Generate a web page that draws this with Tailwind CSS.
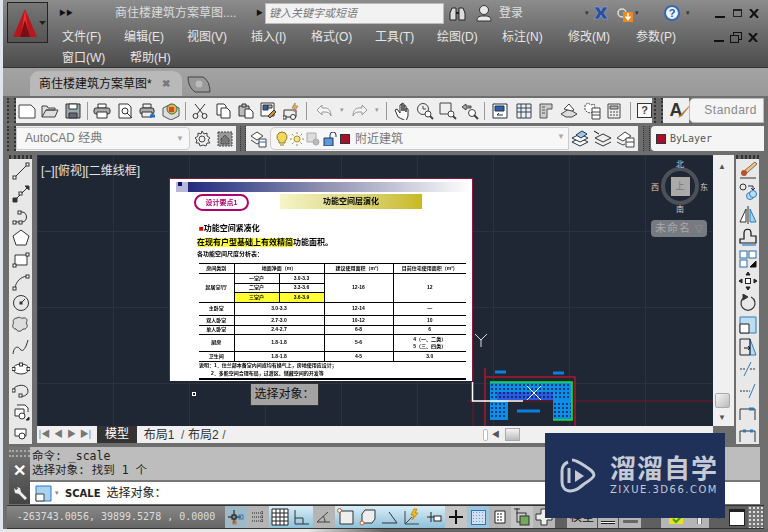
<!DOCTYPE html>
<html lang="zh-CN">

<head>
  <meta charset="UTF-8">
  <title>AutoCAD</title>
  <script src="https://cdn.jsdelivr.net/npm/@tailwindcss/browser@4"></script>
</head>

<body class="m-0 overflow-hidden">
  <div class="relative w-[768px] h-[532px] overflow-hidden flex flex-col bg-[#6e6e6e] font-['Liberation_Sans','Noto_Sans_CJK_SC',sans-serif]">

    <!-- window behind, showing down the left edge -->
    <div class="absolute left-0 top-0 w-[3px] h-full bg-[#dfe6ee] z-10"></div>

    <!-- title bar + menu -->
    <div class="relative h-[68px] shrink-0 bg-gradient-to-b from-[#8c8c8c] to-[#4c4c4c] border-b border-[#333] text-[#e6e6e6]">
      <!-- app button -->
      <div class="absolute left-[7px] top-[2px] w-[41px] h-[41px] border border-[#222] bg-gradient-to-b from-[#777] to-[#555] flex items-center pl-[4px] gap-[1px]">
        <svg width="26" height="30" viewBox="0 0 26 30"><path d="M13 1 L25 29 H18 L16 22 H10 L8 29 H1 Z" fill="#b8161f"/><path d="M13 1 L16 22 H10 Z" fill="#ee3030"/><path d="M13 12 L18 29 H8 Z" fill="#7c0d12"/></svg>
        <svg width="7" height="4" viewBox="0 0 7 4"><path d="M0 0H7L3.5 4Z" fill="#222"/></svg>
      </div>
      <div class="flex items-center h-[26px] pl-[59px]">
        <span class="text-[7px] text-[#111] w-[56px]">▶▶</span>
        <span class="text-[12px] w-[141px] whitespace-nowrap text-[#dcdcdc]">商住楼建筑方案草图....</span>
        <span class="text-[7px] text-[#111] w-[9px]">▶</span>
        <div class="w-[179px] h-[21px] bg-[#f2f2f2] border border-[#bbb] text-[11px] italic text-[#777] pl-[3px] leading-[19px]">键入关键字或短语</div>
        <svg class="ml-[5px]" width="17" height="17" viewBox="0 0 17 17"><path d="M3 3h4v12H1V8zM10 3h4l2 5v7h-6z" fill="#ddd" stroke="#222"/><path d="M7 8h3" stroke="#222" stroke-width="2"/></svg>
        <svg class="ml-[9px]" width="18" height="18" viewBox="0 0 18 18"><circle cx="9" cy="6" r="4.5" fill="#e8e8e8" stroke="#333"/><path d="M2 17c0-5 3-5 7-5s7 0 7 5z" fill="#e8e8e8" stroke="#333"/></svg>
        <span class="ml-[6px] text-[12px] text-[#e0e0e0]">登录</span>
        <span class="ml-[62px] text-[7px] text-[#333]">▾</span>
        <svg class="ml-[4px]" width="16" height="16" viewBox="0 0 16 16"><path d="M1 2h5l2 4 2-4h5l-4 6 4 6h-5l-2-4-2 4H1l4-6z" fill="#2f4f9e" stroke="#9db7e0" stroke-width=".5"/></svg>
        <svg class="ml-[7px]" width="17" height="17" viewBox="0 0 17 17"><circle cx="6" cy="8" r="4" fill="none" stroke="#ddd" stroke-width="1.5"/><rect x="7" y="7" width="10" height="10" fill="#e88a20"/><path d="M12 8v6M9.500 11.500l2.500 3 2.500-3" stroke="#fff" fill="none" stroke-width="1.500"/></svg>
        <span class="ml-[2px] text-[7px] text-[#333]">▾</span>
        <div class="ml-[25px] w-[16px] h-[16px] rounded-full bg-[#eef3fb] border-2 border-[#3767b5] text-[#2c58a6] text-[11px] font-bold leading-[12px] text-center">?</div>
        <span class="ml-[6px] text-[7px] text-[#333]">▾</span>
        <div class="ml-[25px] w-[10px] h-[2px] mt-[8px] bg-[#111]"></div>
        <div class="ml-[8px] w-[9px] h-[8px] border border-[#222] border-t-2"></div>
        <svg class="ml-[7px]" width="10" height="9" viewBox="0 0 10 9"><path d="M1 0l8 9M9 0L1 9" stroke="#111" stroke-width="2"/></svg>
      </div>
      <div class="flex items-center h-[22px] text-[12px] pl-[62px] whitespace-nowrap">
        <span class="w-[62px]">文件(F)</span><span class="w-[63px]">编辑(E)</span><span class="w-[64px]">视图(V)</span><span class="w-[60px]">插入(I)</span><span class="w-[64px]">格式(O)</span><span class="w-[62px]">工具(T)</span><span class="w-[65px]">绘图(D)</span><span class="w-[66px]">标注(N)</span><span class="w-[68px]">修改(M)</span><span class="w-[78px]">参数(P)</span>
        <div class="w-[10px] h-[2px] mt-[8px] bg-[#111]"></div>
        <svg class="ml-[6px]" width="12" height="11" viewBox="0 0 12 11" fill="none" stroke="#111"><rect x="3.500" y=".5" width="8" height="7"/><rect x=".5" y="3.500" width="8" height="7" fill="#666"/></svg>
        <svg class="ml-[6px]" width="10" height="9" viewBox="0 0 10 9"><path d="M1 0l8 9M9 0L1 9" stroke="#111" stroke-width="2"/></svg>
      </div>
      <div class="flex items-center h-[19px] text-[12px] pl-[62px]">
        <span class="w-[68px]">窗口(W)</span><span>帮助(H)</span>
      </div>
    </div>

    <!-- drawing tabs -->
    <div class="relative h-[28px] shrink-0 bg-gradient-to-b from-[#a3a3a3] to-[#999] pl-[30px] flex items-end">
      <div class="w-[152px] h-[25px] rounded-t-[9px] bg-[#b9b9b9] flex items-center pl-[9px] text-[12px] text-[#111]">商住楼建筑方案草图*<span class="ml-[10px] text-[10px] text-[#777] font-bold">✖</span></div>
      <svg class="ml-[5px] mb-[3px]" width="24" height="18" viewBox="0 0 24 18"><path d="M1 2 H16 Q23 6 23 17 H8 Q1 12 1 2Z" fill="#999" stroke="#444"/><circle cx="12" cy="9" r="3.500" fill="#bbb"/></svg>
    </div>

    <!-- standard toolbar -->
    <div class="flex h-[25px] ml-[7px] mt-[2px] shrink-0 w-[757px]">
      <div class="w-[9px] bg-[#666] border-x-2 border-dotted border-[#333]"></div>
      <div class="w-[636px] bg-[#efefef] flex items-center text-[#333]">
        <div class="w-[23px] flex justify-center"><svg width="18" height="16" viewBox="0 0 18 16" fill="#fff" stroke="#444"><path d="M1 2h12l4 4v9H1z"/></svg></div>
        <div class="w-[23px] flex justify-center"><svg width="18" height="16" viewBox="0 0 18 16" fill="#ddd" stroke="#444"><path d="M1 14V3h5l1 2h7v2H5L1 14h13l3-7H5"/></svg></div>
        <div class="w-[23px] flex justify-center"><svg width="16" height="16" viewBox="0 0 16 16" fill="#9aa" stroke="#333"><path d="M1 1h14v14H1z"/><path d="M4 1h8v5H4z" fill="#fff"/><path d="M4 10h8v5H4z" fill="#667"/></svg></div>
        <div class="w-[6px] flex justify-center"><div class="w-[1px] h-[18px] bg-[#999]"></div></div>
        <div class="w-[23px] flex justify-center"><svg width="18" height="16" viewBox="0 0 18 16" fill="#fff" stroke="#333"><path d="M5 1h8v4H5z"/><rect x="1" y="5" width="16" height="6" rx="2" fill="#aaa"/><path d="M4 9h10v6H4z"/></svg></div>
        <div class="w-[23px] flex justify-center"><svg width="16" height="16" viewBox="0 0 16 16" fill="#fff" stroke="#333"><path d="M2 1h9l3 3v11H2z"/><circle cx="8" cy="8" r="3"/><path d="M10 10l5 5"/></svg></div>
        <div class="w-[23px] flex justify-center"><svg width="18" height="16" viewBox="0 0 18 16" fill="#eee" stroke="#333"><path d="M4 1h8v4H4z"/><rect x="1" y="5" width="14" height="6" rx="2" fill="#aaa"/><path d="M3 9h10v5H3z"/><path d="M11 13h5" stroke="#1b6fc4" stroke-width="3"/></svg></div>
        <div class="w-[23px] flex justify-center"><svg width="18" height="18" viewBox="0 0 18 18"><path d="M1 6l8-4 8 4v8l-8 4-8-4z" fill="#ddd" stroke="#555"/><circle cx="10" cy="7" r="5" fill="#e9b04a" stroke="#2a7a4a"/><path d="M7 5h5v5H7z" fill="#d04a3a"/></svg></div>
        <div class="w-[6px] flex justify-center"><div class="w-[1px] h-[18px] bg-[#999]"></div></div>
        <div class="w-[23px] flex justify-center"><svg width="16" height="16" viewBox="0 0 16 16" fill="none" stroke="#333"><path d="M3 1l8 10M13 1L5 11"/><circle cx="3.500" cy="13" r="2.500"/><circle cx="12.500" cy="13" r="2.500"/></svg></div>
        <div class="w-[23px] flex justify-center"><svg width="16" height="16" viewBox="0 0 16 16" fill="#fff" stroke="#333"><path d="M2 1h7l2 2v9H2z"/><path d="M6 5h6l3 3v7H6z"/></svg></div>
        <div class="w-[23px] flex justify-center"><svg width="16" height="16" viewBox="0 0 16 16" fill="#bbb" stroke="#333"><path d="M1 3h10v10H1z"/><path d="M4 1h4v3H4z"/><path d="M7 6h5l3 3v6H7z" fill="#fff"/></svg></div>
        <div class="w-[23px] flex justify-center"><svg width="18" height="18" viewBox="0 0 18 18" stroke="#333"><path d="M1 1h13v13H1z" fill="#fff"/><path d="M3 3h5v5H3z" fill="#2f5da8"/><path d="M8 3h4v3H8z" fill="#bbb"/><path d="M8 14l6-6 2 2-6 6z" fill="#d98c2b"/></svg></div>
        <div class="w-[23px] flex justify-center"><svg width="18" height="18" viewBox="0 0 18 18" fill="none" stroke="#333"><path d="M1 8h12v7H1z"/><circle cx="10" cy="15" r="2.500" fill="#fff"/><rect x="0" y="14" width="3" height="3" fill="#fff"/><path d="M12 1l-3 5h3l-1 4 4-6h-3z" fill="#f2c21d" stroke="#a87"/></svg></div>
        <div class="w-[6px] flex justify-center"><div class="w-[1px] h-[18px] bg-[#999]"></div></div>
        <div class="w-[21px] ml-[4px] flex justify-center"><svg width="16" height="14" viewBox="0 0 16 14" fill="#f5f5f5" stroke="#999"><path d="M6 1L1 6l5 5V8h3c3 0 5 1 6 4 0-6-3-8-6-8H6z"/></svg></div>
        <span class="text-[7px] text-[#999] w-[14px] text-center">▾</span>
        <div class="w-[22px] flex justify-center"><svg width="16" height="14" viewBox="0 0 16 14" fill="#f5f5f5" stroke="#999"><path d="M10 1l5 5-5 5V8H7c-3 0-5 1-6 4 0-6 3-8 6-8h3z"/></svg></div>
        <span class="text-[7px] text-[#999] w-[13px] text-center">▾</span>
        <div class="w-[6px] flex justify-center"><div class="w-[1px] h-[18px] bg-[#999]"></div></div>
        <div class="w-[23px] ml-[2px] flex justify-center"><svg width="18" height="18" viewBox="0 0 18 18" fill="#fff" stroke="#333"><path d="M4 15L1 8l2-1 3 4V3l2-1v7-8l2 1v7-6l2 1v6-4l2 1v7l-2 5z"/></svg></div>
        <div class="w-[22px] flex justify-center"><svg width="18" height="18" viewBox="0 0 18 18" fill="none" stroke="#444"><circle cx="7" cy="7" r="5.500"/><path d="M7 4v3h3"/><circle cx="12" cy="12" r="3" fill="#fff"/><path d="M14 14l3 3" stroke-width="2"/></svg></div>
        <div class="w-[23px] flex justify-center"><svg width="18" height="18" viewBox="0 0 18 18" fill="none" stroke="#444"><path d="M1 1h11v11H1z"/><circle cx="12" cy="12" r="3" fill="#fff"/><path d="M14 14l3 3" stroke-width="2"/></svg></div>
        <div class="w-[22px] flex justify-center"><svg width="18" height="18" viewBox="0 0 18 18" fill="none" stroke="#444"><path d="M1 5l4-3v2h5v2H5v2z" fill="#aaa"/><circle cx="11" cy="11" r="3.500" fill="#fff"/><path d="M13 13l4 4" stroke-width="2"/></svg></div>
        <div class="w-[6px] flex justify-center"><div class="w-[1px] h-[18px] bg-[#999]"></div></div>
        <div class="w-[25px] flex justify-center"><svg width="16" height="16" viewBox="0 0 16 16" stroke="#234"><path d="M1 1h14v14H1z" fill="#fff"/><path d="M3 3h9v5H3z" fill="#2f5da8"/><path d="M5 12h6M5 12l2-2" fill="none"/></svg></div>
        <div class="w-[23px] flex justify-center"><svg width="16" height="16" viewBox="0 0 16 16" fill="none" stroke="#345"><path d="M1 1h14v14H1zM5 1v14M10 1v14M5 5h5M5 9h5M1 5h4M1 9h4M10 5h5M10 9h5"/></svg></div>
        <div class="w-[22px] flex justify-center"><svg width="14" height="16" viewBox="0 0 14 16" fill="#ccc" stroke="#555"><path d="M1 1h12v5H8v9H1z"/><path d="M3 4h3M3 7h3M3 10h3"/></svg></div>
        <div class="w-[23px] flex justify-center"><svg width="18" height="16" viewBox="0 0 18 16" fill="#ddd" stroke="#444"><path d="M1 11l8-5 8 5-5 3H6z"/><path d="M4 6l5-5 5 6-2 1z" fill="#fff"/></svg></div>
        <div class="w-[23px] flex justify-center"><svg width="18" height="18" viewBox="0 0 18 18" fill="#fff" stroke="#444"><path d="M2 8V3l3-2 3 2 3-1 1 4-2 4-3 1-3-1z" stroke-dasharray="2 1"/><path d="M9 6h8v11H9zM9 10h8M9 13h8"/></svg></div>
        <div class="w-[22px] flex justify-center"><svg width="14" height="16" viewBox="0 0 14 16" fill="#eee" stroke="#444"><path d="M1 1h12v14H1z"/><path d="M3 3h8v3H3z" fill="#bbb"/><path d="M3 9h2M6 9h2M9 9h2M3 12h2M6 12h2M9 12h2"/></svg></div>
        <div class="w-[6px] ml-[2px] flex justify-center"><div class="w-[1px] h-[18px] bg-[#999]"></div></div>
        <div class="ml-[4px] w-[15px] h-[15px] border border-[#333] bg-[#f8f8f8] text-[11px] font-bold leading-[13px] text-center text-[#444]">?</div>
      </div>
      <div class="w-[9px] ml-[2px] bg-[#666] border-x-2 border-dotted border-[#333]"></div>
      <div class="w-[26px] bg-[#efefef] flex justify-center items-center"><span class="relative text-[18px] font-bold text-[#333]">A<svg class="absolute left-[6px] top-[8px]" width="14" height="14" viewBox="0 0 14 14"><path d="M13 1L5 9l-3 4 4-2 7-9z" fill="#b5792c"/></svg></span></div>
      <div class="flex-1 bg-[#f5f5f5] rounded-l-[5px] border border-[#bbb] text-[12px] tracking-[0.5px] text-[#888] text-right pr-[6px] leading-[23px]">Standard</div>
    </div>

    <!-- workspace / layers toolbar -->
    <div class="flex h-[25px] ml-[7px] mt-[3px] shrink-0 w-[757px]">
      <div class="w-[9px] bg-[#666] border-x-2 border-dotted border-[#333]"></div>
      <div class="w-[220px] bg-[#efefef] flex items-center">
        <div class="w-[174px] h-[23px] bg-[#f7f7f7] border border-[#ccc] rounded-r-[4px] text-[12px] text-[#777] pl-[8px] leading-[21px] relative">AutoCAD 经典<span class="absolute right-[5px] top-0 text-[8px] text-[#aaa]">▼</span></div>
        <svg class="ml-[3px]" width="18" height="18" viewBox="0 0 18 18" fill="none" stroke="#444"><circle cx="9" cy="9" r="3"/><path d="M9 1l2 3 3-1 0 3 3 2-2 2 2 3-3 0-1 3-3-1-3 1-1-3-3 0 1-3-2-2 3-2 0-3 3 1z"/></svg>
        <svg class="ml-[5px]" width="18" height="18" viewBox="0 0 18 18" fill="#999" stroke="#444" stroke-dasharray="2 1"><path d="M2 2h14v14H2z"/><path d="M5 9l4-4 4 4v5H5z" fill="#777"/></svg>
      </div>
      <div class="w-[6px] ml-[4px] bg-[#666] border-x border-dotted border-[#333]"></div>
      <div class="w-[392px] bg-[#efefef] flex items-center">
        <div class="w-[24px] flex justify-center"><svg width="18" height="18" viewBox="0 0 18 18" fill="#fff" stroke="#444"><path d="M2 6l6-4 6 4-6 4zM2 10l6 4 2-1"/><path d="M10 9h7v8h-7z"/><path d="M10 12h7" stroke="#1b6fc4"/></svg></div>
        <div class="w-[299px] h-[23px] bg-[#f7f7f7] border border-[#ccc] rounded-l-[5px] flex items-center relative text-[12px] text-[#777]">
          <svg class="ml-[5px]" width="12" height="16" viewBox="0 0 12 16" stroke="#8a7a2a"><path d="M6 1a5 5 0 0 1 3 9v2H3v-2A5 5 0 0 1 6 1z" fill="#f5d85a"/><path d="M4 14h4" /></svg>
          <svg class="ml-[2px]" width="14" height="14" viewBox="0 0 14 14" stroke="#a98f32"><circle cx="7" cy="7" r="3" fill="#f4e58a"/><path d="M7 0v2M7 12v2M0 7h2M12 7h2M2 2l1.500 1.500M10.500 10.500L12 12M12 2l-1.500 1.500M3.500 10.500L2 12"/></svg>
          <svg class="ml-[2px]" width="14" height="14" viewBox="0 0 14 14" fill="#ddd" stroke="#aaa"><path d="M1 1h9v9H1z"/><circle cx="10" cy="10" r="3" fill="#bbb"/></svg>
          <svg class="ml-[3px]" width="14" height="14" viewBox="0 0 14 14" stroke="#236"><path d="M1 6h9v8H1z" fill="#5a9ad8"/><path d="M7 6V3a3 3 0 0 1 6 0v2" fill="none"/></svg>
          <div class="ml-[3px] w-[10px] h-[10px] bg-[#a80f2d] border border-[#333]"></div>
          <span class="ml-[5px]">附近建筑</span>
          <span class="absolute right-[3px] top-[3px] text-[8px] text-[#aaa]">▼</span>
        </div>
        <svg class="ml-[1px]" width="20" height="18" viewBox="0 0 20 18" fill="#9cc6ea" stroke="#234"><path d="M2 12l8-4 8 4-8 4z" fill="#fff"/><path d="M2 8l8-4 8 4-8 4z" fill="#fff"/><path d="M6 5l6-4 5 3-6 4z"/></svg>
        <svg class="ml-[3px]" width="20" height="18" viewBox="0 0 20 18" fill="none" stroke="#333"><path d="M2 8l8-4 8 4-8 4zM2 12l8 4 8-4"/><path d="M1 1l5 3" stroke="#111"/></svg>
        <svg class="ml-[3px]" width="20" height="18" viewBox="0 0 20 18" fill="#fff" stroke="#444"><path d="M1 8l8-6 6 4-8 5zM1 12l6 3 2-1"/><path d="M10 8h8v9h-8zM10 12h8"/></svg>
      </div>
      <div class="w-[7px] ml-[5px] bg-[#666] border-x border-dotted border-[#333]"></div>
      <div class="flex-1 ml-[1px] bg-[#f5f5f5] flex items-center rounded-l-[4px]">
        <div class="ml-[5px] w-[10px] h-[10px] bg-[#a80f2d] border border-[#333]"></div>
        <span class="ml-[4px] text-[10px] font-['DejaVu_Sans_Mono',monospace] text-[#555]">ByLayer</span>
      </div>
    </div>

    <!-- main area -->
    <div class="flex h-[289px] mt-[4px] shrink-0 relative">
      <!-- left tools -->
      <div class="w-[23px] ml-[9px] shrink-0 bg-[#e8e8e8] flex flex-col items-center overflow-hidden">
        <div class="w-full h-[8px] bg-[#666] border-y-2 border-dotted border-[#333] mb-[1px]"></div>
        <div class="h-[22px] shrink-0 flex items-center"><svg width="18" height="18" viewBox="0 0 18 18" fill="#fff" stroke="#333"><path d="M3 15L15 3"/><rect x="1" y="14" width="3" height="3"/><rect x="14" y="1" width="3" height="3"/></svg></div>
        <div class="h-[24px] shrink-0 flex items-center"><svg width="18" height="18" viewBox="0 0 18 18" fill="#fff" stroke="#333"><path d="M2 16L16 2"/><path d="M1 13h4v4H1z" fill="#333"/><rect x="7" y="7" width="3" height="3"/><path d="M13 1h4v4z" fill="#333"/></svg></div>
        <div class="h-[21px] shrink-0 flex items-center"><svg width="18" height="18" viewBox="0 0 18 18" fill="none" stroke="#333"><path d="M2 14h8c6 0 6-10 0-10H7"/><rect x="1" y="13" width="3" height="3" fill="#fff"/><rect x="7" y="13" width="3" height="3" fill="#fff"/><rect x="6" y="3" width="3" height="3" fill="#fff"/></svg></div>
        <div class="h-[22px] shrink-0 flex items-center"><svg width="18" height="18" viewBox="0 0 18 18" fill="#fff" stroke="#333"><path d="M9 1l8 6-3 9H4L1 7z"/></svg></div>
        <div class="h-[22px] shrink-0 flex items-center"><svg width="18" height="18" viewBox="0 0 18 18" fill="#fff" stroke="#333"><path d="M3 4h12v10H3z"/><rect x="1" y="13" width="3" height="3"/><rect x="14" y="2" width="3" height="3"/></svg></div>
        <div class="h-[21px] shrink-0 flex items-center"><svg width="18" height="18" viewBox="0 0 18 18" fill="none" stroke="#333"><path d="M3 15C4 8 9 4 15 3"/><rect x="1" y="14" width="3" height="3" fill="#fff"/><rect x="14" y="2" width="3" height="3" fill="#fff"/></svg></div>
        <div class="h-[22px] shrink-0 flex items-center"><svg width="18" height="18" viewBox="0 0 18 18" fill="none" stroke="#333"><circle cx="9" cy="9" r="7.500"/><path d="M9 9l4-4"/><rect x="8" y="8" width="2" height="2" fill="#333"/></svg></div>
        <div class="h-[22px] shrink-0 flex items-center"><svg width="18" height="18" viewBox="0 0 18 18" fill="#ddd" stroke="#444"><path d="M5 2c3-2 4 1 6 0 4-1 5 3 3 5 3 3 0 7-3 6-2 3-6 3-7 0-4 0-4-5-2-6-2-2 0-5 3-5z"/></svg></div>
        <div class="h-[22px] shrink-0 flex items-center"><svg width="18" height="18" viewBox="0 0 18 18" fill="none" stroke="#333"><path d="M1 16c1-8 5-8 7-5s5 2 8-9"/></svg></div>
        <div class="h-[22px] shrink-0 flex items-center"><svg width="18" height="18" viewBox="0 0 18 18" fill="#fff" stroke="#333"><ellipse cx="9" cy="9" rx="8" ry="5"/><rect x="7.500" y="3" width="3" height="3"/><rect x="0" y="7.500" width="3" height="3"/><rect x="15" y="7.500" width="3" height="3"/></svg></div>
        <div class="h-[21px] shrink-0 flex items-center"><svg width="18" height="18" viewBox="0 0 18 18" fill="none" stroke="#333"><path d="M1 8c2-6 15-7 15 1 0 5-6 6-9 5"/><rect x="0" y="7" width="3" height="3" fill="#fff"/><rect x="7" y="12" width="3" height="3" fill="#fff"/></svg></div>
        <div class="h-[22px] shrink-0 flex items-center"><svg width="18" height="18" viewBox="0 0 18 18" fill="#fff" stroke="#333"><path d="M5 2h8l3 3v4M3 6h9v7H3z"/><circle cx="10" cy="13" r="3"/><path d="M14 17l3-3v3z" fill="#111"/></svg></div>
        <div class="h-[22px] shrink-0 flex items-center"><svg width="18" height="18" viewBox="0 0 18 18" fill="#fff" stroke="#333"><path d="M3 4h11v7H3z"/><circle cx="10" cy="11" r="3"/></svg></div>
      </div>

      <!-- canvas column -->
      <div class="w-[676px] ml-[5px] shrink-0 flex flex-col">
        <div class="relative h-[271px] overflow-hidden bg-[#202734] bg-[linear-gradient(#2b3340_1px,transparent_1px),linear-gradient(90deg,#2b3340_1px,transparent_1px)] bg-[length:76px_76px]">
          <div class="absolute left-[4px] top-[7px] text-[12px] text-[#e4e4e4] whitespace-nowrap">[−][俯视][二维线框]</div>

          <!-- pasted image, free on the drawing -->
          <div class="absolute left-[132px] top-[23px] w-[304px] h-[203px] bg-white border-t border-x border-[#8b1a3a] text-black overflow-hidden blur-[0.3px]">
            <div class="absolute left-[6px] top-[3px] w-[295px] h-[10px] bg-gradient-to-r from-[#1e1e78] via-[#9090b0] to-white"></div>
            <div class="absolute left-[6px] top-[3px] w-[12px] h-[10px] bg-[#b8b8d8]"></div>
            <div class="absolute left-[8px] top-[3px] w-[4px] h-[4px] bg-[#101068]"></div>
            <div class="absolute left-[24px] top-[15px] w-[55px] h-[17px] rounded-full border-2 border-[#b0006e] text-[7px] font-bold text-[#b0006e] text-center leading-[13px]">设计要点1</div>
            <div class="absolute left-[110px] top-[15px] w-[142px] h-[15px] bg-gradient-to-r from-[#f5f5c8] to-[#c9b91a] text-[8px] font-bold text-center leading-[15px]">功能空间层演化</div>
            <div class="absolute left-[29px] top-[44px] text-[8px] font-bold whitespace-nowrap"><span class="text-[#e00000]">■</span>功能空间紧凑化</div>
            <div class="absolute left-[27px] top-[58px] text-[8px] font-bold whitespace-nowrap"><span class="bg-[#ffff33]">在现有户型基础上有效精简</span>功能面积。</div>
            <div class="absolute left-[27px] top-[71px] text-[6px] font-bold whitespace-nowrap">各功能空间尺度分析表：</div>
            <table class="absolute left-[29px] top-[84px] w-[267px] h-[115px] border-collapse border-b-2 border-t border-black text-[5px] font-bold text-center table-fixed [&_td]:border-y [&_td]:border-black [&_td]:p-0">
              <tr class="h-[10px]"><td class="w-[35px] border-r border-[#999]">房间类别</td><td class="w-[90px] border-r border-[#999]" colspan="2">地面净面（m）</td><td class="w-[69px] border-r border-[#999]">建议使用面积（m²）</td><td>目前住宅使用面积（m²）</td></tr>
              <tr class="h-[10px]"><td class="border-r border-[#999]" rowspan="3">起居室/厅</td><td class="w-[54px] border-r border-[#999]">一室户</td><td>3.0-3.3</td><td class="border-x border-[#999]" rowspan="3">12-16</td><td rowspan="3">12</td></tr>
              <tr class="h-[9px]"><td class="border-r border-[#999]">二室户</td><td>3.3-3.6</td></tr>
              <tr class="h-[10px]"><td class="border-r border-[#999] bg-[#ffff33]">三室户</td><td class="bg-[#ffff33]">3.6-3.9</td></tr>
              <tr class="h-[13px]"><td class="border-r border-[#999]">主卧室</td><td class="border-r border-[#999]" colspan="2">3.0-3.3</td><td class="border-r border-[#999]">12-14</td><td>—</td></tr>
              <tr class="h-[10px]"><td class="border-r border-[#999]">双人卧室</td><td class="border-r border-[#999]" colspan="2">2.7-3.0</td><td class="border-r border-[#999]">10-12</td><td>10</td></tr>
              <tr class="h-[9px]"><td class="border-r border-[#999]">单人卧室</td><td class="border-r border-[#999]" colspan="2">2.4-2.7</td><td class="border-r border-[#999]">6-8</td><td>6</td></tr>
              <tr class="h-[17px]"><td class="border-r border-[#999]">厨房</td><td class="border-r border-[#999]" colspan="2">1.8-1.8</td><td class="border-r border-[#999]">5-6</td><td>4（一、二类）<br>5（三、四类）</td></tr>
              <tr class="h-[10px]"><td class="border-r border-[#999]">卫生间</td><td class="border-r border-[#999]" colspan="2">1.8-1.8</td><td class="border-r border-[#999]">4-5</td><td>3.0</td></tr>
              <tr class="h-[17px]"><td class="text-left pl-[5px]" colspan="5">说明：1．住兰部本备室内间或均有换气上，房地使用应设计；<br><span class="pl-[12px]">2．多能空间合理布局，过渡区、储藏空间的开发等</span></td></tr>
            </table>
          </div>

          <!-- grip and crosshair -->
          <div class="absolute left-[155px] top-[237px] w-[4px] h-[4px] border border-white"></div>
          <svg class="absolute left-[437px] top-[178px]" width="14" height="14" viewBox="0 0 14 14" fill="none" stroke="#ddd"><path d="M1 1l6 6 6-6M7 7v7"/></svg>

          <!-- tooltip -->
          <div class="absolute left-[213px] top-[228px] w-[69px] h-[23px] bg-[#a3a3a3] border border-[#333] text-[12px] text-[#111] text-center leading-[21px]">选择对象：</div>

          <!-- building drawing -->
          <svg class="absolute left-[430px] top-[210px]" width="246" height="61" viewBox="0 0 246 61" fill="none">
            <path d="M6 0V61M0 36H246" stroke="#7a1528"/>
            <path d="M18 3V61M18 12H108V61" stroke="#a81a30" stroke-width="1.500"/>
            <path d="M23 17H105V55H86V35H41V55H23Z" fill="#0d8fe8"/>
            <path d="M23 17H105V55H86" stroke="#1de81d" stroke-width="1.500"/>
            <path d="M30 27H86V35H30Z" fill="#2a5ae0"/>
            <path d="M24 20H104M24 24H104M24 28H104M24 32H104M24 39H40M24 43H40M24 47H40M24 51H40M87 39H104M87 43H104M87 47H104M87 51H104" stroke="#0b1f55" stroke-dasharray="2 2" stroke-width="1.500"/>
            <path d="M28 7h11M86 8h11M50 46h23" stroke="#0d7fe0" stroke-width="3"/>
            <path d="M60 21L74 35M60 35L74 21" stroke="#fff"/>
            <path d="M5.500 17V36H56" stroke="#fff" stroke-width="1.500"/>
          </svg>

          <!-- view cube -->
          <div class="absolute left-[624px] top-[12px] w-[38px] h-[38px] rounded-full border-[4px] border-[#4d5058] flex items-center justify-center">
            <div class="w-[19px] h-[19px] bg-[#aaa] text-[9px] text-[#777] text-center leading-[19px]">上</div>
          </div>
          <span class="absolute left-[639px] top-[4px] text-[8px] text-[#ccc]">北</span>
          <span class="absolute left-[663px] top-[27px] text-[8px] text-[#ccc]">东</span>
          <span class="absolute left-[639px] top-[49px] text-[8px] text-[#ccc]">南</span>
          <span class="absolute left-[614px] top-[27px] text-[8px] text-[#ccc]">西</span>
          <div class="absolute left-[614px] top-[65px] w-[56px] h-[17px] rounded-[4px] bg-[#777a80] text-[11px] tracking-[1px] text-[#a9a9ad] pl-[4px] leading-[17px] whitespace-nowrap">未命名 <span class="text-[8px]">▽</span></div>
        </div>
        <!-- layout tabs and horizontal scrollbar -->
        <div class="h-[17px] bg-[#f0f0f0] flex items-center text-[#333] text-[12px]">
          <span class="w-[15px] text-[9px] text-center text-[#777]">|◀</span><span class="w-[13px] text-[9px] text-center text-[#777]">◀</span><span class="w-[13px] text-[9px] text-center text-[#777]">▶</span><span class="w-[15px] text-[9px] text-center text-[#777]">▶|</span>
          <span class="w-[40px] h-full bg-[#333] text-white text-center leading-[17px] ml-[4px]">模型</span>
          <span class="w-[44px] text-center">布局1</span><span class="text-[#555]">/</span>
          <span class="w-[38px] text-center">布局2</span><span class="text-[#555]">/</span>
          <div class="ml-[257px] w-[5px] h-[12px] border border-[#bbb] rounded-[2px] bg-white"></div>
          <span class="ml-[4px] text-[8px] text-[#555]">◀</span>
          <div class="ml-[5px] w-[15px] h-[13px] border border-[#aaa] bg-gradient-to-b from-[#f5f5f5] to-[#bbb]"></div>
        </div>
      </div>

      <!-- vertical scrollbar -->
      <div class="relative w-[21px] h-[271px] bg-[#f0f0f0] shrink-0">
        <span class="absolute left-[5px] top-[6px] text-[8px] text-[#555]">▲</span>
        <div class="absolute left-[2px] top-[238px] w-[15px] h-[15px] border border-[#aaa] rounded-[2px] bg-gradient-to-br from-[#f5f5f5] to-[#bbb]"></div>
        <span class="absolute left-[5px] top-[257px] text-[8px] text-[#555]">▼</span>
      </div>

      <!-- right tools -->
      <div class="w-[23px] ml-[2px] shrink-0 bg-[#e8e8e8] flex flex-col items-center overflow-hidden">
        <div class="w-full h-[8px] bg-[#666] border-y-2 border-dotted border-[#333]"></div>
        <div class="h-[22px] shrink-0 flex items-center"><svg width="18" height="18" viewBox="0 0 18 18"><path d="M16 1l2 2-10 9-3-2z" fill="#e6c88a" stroke="#865"/><circle cx="5" cy="12" r="3" fill="#b5542c"/><path d="M1 17h16" stroke="#333"/></svg></div>
        <div class="h-[22px] shrink-0 flex items-center"><svg width="18" height="18" viewBox="0 0 18 18" fill="none" stroke="#333"><circle cx="4" cy="4" r="3"/><path d="M9 3h5v4M12 5l2 2 2-2"/><circle cx="11" cy="13" r="3.500" stroke="#2a7ac0" fill="#bcdcf2"/><circle cx="14" cy="11" r="3.500" stroke="#2a7ac0" fill="#bcdcf2"/></svg></div>
        <div class="h-[23px] shrink-0 flex items-center"><svg width="18" height="18" viewBox="0 0 18 18" stroke="#333"><path d="M9 0v18"/><path d="M7 3v13H1z" fill="#fff"/><path d="M11 3v13h6z" fill="#a9d2f0" stroke="#2a7ac0"/></svg></div>
        <div class="h-[21px] shrink-0 flex items-center"><svg width="18" height="18" viewBox="0 0 18 18" fill="none" stroke="#111" stroke-width="1.200"><path d="M1 15V11h4V5c0-5 7-5 7 0v3h5v7z"/><path d="M3 17h14" stroke="#2a7ac0"/></svg></div>
        <div class="h-[23px] shrink-0 flex items-center"><svg width="18" height="18" viewBox="0 0 18 18" fill="#fff" stroke="#2a6aa8"><rect x="1" y="1" width="7" height="7"/><rect x="10" y="1" width="7" height="7"/><rect x="1" y="10" width="7" height="7"/><path d="M11 17l6-6v6z" fill="#111" stroke="#111"/></svg></div>
        <div class="h-[21px] shrink-0 flex items-center"><svg width="18" height="18" viewBox="0 0 18 18" stroke="#222" fill="#222"><rect x="6.500" y="6.500" width="5" height="5" fill="#fff"/><path d="M9 0l2 3H7zM9 18l-2-3h4zM0 9l3-2v4zM18 9l-3 2V7z"/></svg></div>
        <div class="h-[23px] shrink-0 flex items-center"><svg width="18" height="18" viewBox="0 0 18 18" fill="none" stroke="#333"><path d="M6 3a7 7 0 1 0 6 0" stroke-width="1.200"/><path d="M4 0l5 3-5 3z" fill="#333"/></svg></div>
        <div class="h-[22px] shrink-0 flex items-center"><svg width="18" height="18" viewBox="0 0 18 18" fill="#fff"><path d="M1 1h16v16H1z" fill="#bcdcf2" stroke="#2a7ac0"/><path d="M1 8h9v9H1z" stroke="#222"/></svg></div>
        <div class="h-[22px] shrink-0 flex items-center"><svg width="18" height="18" viewBox="0 0 18 18" fill="#fff"><path d="M11 1l6 16H11z" fill="#bcdcf2" stroke="#2a7ac0"/><path d="M1 1h10v16H1z" fill="none" stroke="#222"/><path d="M5 10h6M9 8l2 2-2 2" stroke="#111" fill="none"/></svg></div>
        <div class="h-[22px] shrink-0 flex items-center"><svg width="18" height="18" viewBox="0 0 18 18" fill="none"><path d="M1 9h6M11 9h6" stroke="#333" stroke-dasharray="2 1"/><path d="M5 16L12 2" stroke="#2a7ac0"/></svg></div>
        <div class="h-[22px] shrink-0 flex items-center"><svg width="18" height="18" viewBox="0 0 18 18" fill="none"><path d="M1 9h10" stroke="#333" stroke-dasharray="2 1"/><path d="M10 16L16 2" stroke="#2a7ac0"/></svg></div>
        <div class="h-[22px] shrink-0 flex items-center"><svg width="18" height="18" viewBox="0 0 18 18" fill="none" stroke="#333"><path d="M1 16V5h15v11"/><path d="M10 5h5" stroke="#2a7ac0" stroke-width="3"/></svg></div>
        <div class="h-[22px] shrink-0 flex items-center"><svg width="18" height="18" viewBox="0 0 18 18" fill="none" stroke="#333"><path d="M1 16V5h15v11"/><path d="M4 5h3M11 5h3" stroke="#2a7ac0" stroke-width="3"/></svg></div>
      </div>
    </div>

    <!-- command window -->
    <div class="flex ml-[9px] mt-[3px] shrink-0 w-[751px] h-[57px]">
      <div class="w-[21px] bg-gradient-to-b from-[#777] to-[#444] flex flex-col items-center">
        <div class="w-full h-[7px] mt-[3px] border-y-2 border-dotted border-[#aaa]"></div>
        <span class="text-[16px] mt-[6px] font-bold text-white leading-[16px]">✕</span>
        <svg class="mt-[7px]" width="16" height="16" viewBox="0 0 16 16"><path d="M2 2l2 2 2-1-1-2 3 1 1 4 6 6-2 2-6-6-4-1z" fill="#eee"/></svg>
      </div>
      <div class="flex-1 flex flex-col">
        <div class="h-[35px] bg-[#bdbdbd] border-b-2 border-[#777] text-[11.500px] leading-[13.500px] font-['DejaVu_Sans_Mono','Noto_Sans_CJK_SC',monospace] text-[#222] pl-[2px] pt-[3px] whitespace-pre"><div>命令: _scale</div><div>选择对象: 找到 1 个</div></div>
        <div class="flex-1 bg-white flex items-center pl-[5px] text-[12px] text-[#222]">
          <svg width="17" height="17" viewBox="0 0 17 17" fill="#fff"><path d="M1 1h15v15H1z" fill="#a9d2f0" stroke="#2a7ac0"/><path d="M1 9h8v7H1z" stroke="#444"/></svg>
          <span class="ml-[3px] text-[7px] text-[#888]">▾</span>
          <span class="ml-[6px] font-['DejaVu_Sans',sans-serif] font-bold text-[10px]">SCALE</span>
          <span class="ml-[6px]">选择对象：</span>
        </div>
      </div>
    </div>

    <!-- status bar -->
    <div class="flex items-center ml-[7px] mt-[1px] w-[757px] h-[24px] shrink-0 bg-[#5f5f5f] border-y border-[#333]">
      <div class="w-[218px] h-full bg-gradient-to-b from-[#888] to-[#666] text-[10px] font-['DejaVu_Sans_Mono',monospace] text-[#ddd] text-center leading-[22px] whitespace-pre">-263743.0056, 39899.5278 , 0.0000</div>
      <div class="w-[22px] h-full bg-[#9fb9c6] flex items-center justify-center"><svg width="18" height="16" viewBox="0 0 18 16" fill="none" stroke="#111"><path d="M1 8h13M7 1v13"/><rect x="5" y="6" width="4" height="4" fill="#888"/><rect x="12" y="6" width="4" height="4" stroke="#2a7ac0"/><rect x="6" y="12" width="3" height="3" stroke="#d05a2a"/></svg></div>
      <div class="w-[22px] h-full bg-[#b5b5b5] flex items-center justify-center"><svg width="14" height="14" viewBox="0 0 14 14" stroke="#222" stroke-dasharray="1 1"><path d="M1 3h12M1 7h12M1 11h12M11 1v12"/></svg></div>
      <div class="w-[22px] h-full bg-gradient-to-b from-[#d8eef8] to-[#8fc0d8] flex items-center justify-center"><svg width="18" height="18" viewBox="0 0 18 18" fill="#fff" stroke="#222"><path d="M1 1h16v16H1zM5 1v16M9 1v16M13 1v16M1 5h16M1 9h16M1 13h16"/></svg></div>
      <div class="w-[22px] h-full bg-gradient-to-b from-[#d8eef8] to-[#8fc0d8] flex items-center justify-center"><svg width="18" height="18" viewBox="0 0 18 18" fill="none" stroke="#333"><path d="M2 2v14h14M2 10h8v6"/></svg></div>
      <div class="w-[22px] h-full bg-[#b5b5b5] flex items-center justify-center"><svg width="16" height="16" viewBox="0 0 16 16" fill="none" stroke="#444"><path d="M14 13H1L12 3"/><path d="M9 13a8 8 0 0 0-2-6"/></svg></div>
      <div class="w-[22px] h-full bg-gradient-to-b from-[#d8eef8] to-[#8fc0d8] flex items-center justify-center"><svg width="18" height="18" viewBox="0 0 18 18" fill="#eee" stroke="#333"><path d="M3 3h13v13H3z"/><circle cx="2.500" cy="2.500" r="2" fill="#fff" stroke="#d05a2a"/></svg></div>
      <div class="w-[22px] h-full bg-gradient-to-b from-[#d8eef8] to-[#8fc0d8] flex items-center justify-center"><svg width="18" height="18" viewBox="0 0 18 18" fill="#eee" stroke="#333"><path d="M3 6l3-4h10v9l-3 4H3z"/><circle cx="3" cy="15" r="2" fill="#fff" stroke="#d05a2a"/></svg></div>
      <div class="w-[22px] h-full bg-gradient-to-b from-[#d8eef8] to-[#8fc0d8] flex items-center justify-center"><svg width="18" height="16" viewBox="0 0 18 16" fill="none" stroke="#333"><path d="M1 14h15L8 3"/></svg></div>
      <div class="w-[22px] h-full bg-gradient-to-b from-[#d8eef8] to-[#8fc0d8] flex items-center justify-center"><svg width="18" height="18" viewBox="0 0 18 18" fill="none" stroke="#444"><path d="M2 3v13h14M2 16L9 9"/><path d="M11 1l-3 6h3l-2 5 6-7h-3l2-4z" fill="#f2c21d" stroke="#c98a1a"/></svg></div>
      <div class="w-[22px] h-full bg-gradient-to-b from-[#d8eef8] to-[#8fc0d8] flex items-center justify-center"><svg width="16" height="14" viewBox="0 0 16 14" fill="none" stroke="#222"><path d="M1 7h9M5 2v10"/><rect x="8" y="6" width="7" height="5" fill="#fff"/></svg></div>
      <div class="w-[22px] h-full bg-[#c5c5c5] flex items-center justify-center"><svg width="14" height="14" viewBox="0 0 14 14" stroke="#111" stroke-width="2"><path d="M0 7h14M7 0v14"/></svg></div>
      <div class="w-[22px] h-full bg-[#9fc4de] flex items-center justify-center"><div class="w-[15px] h-[15px] border border-[#2a7ac0] bg-[#cfe0f0] bg-[radial-gradient(#7a9cc8_1px,transparent_1px)] bg-[length:3px_3px]"></div></div>
      <div class="w-[22px] h-full bg-[#b5b5b5] flex items-center justify-center"><svg width="12" height="14" viewBox="0 0 12 14" fill="#fff" stroke="#222"><path d="M1 1h10v12H1z"/><path d="M3 4h6M3 7h6M3 10h6" stroke-dasharray="2 1"/></svg></div>
      <div class="w-[22px] h-full bg-[#c5c5c5] flex items-center justify-center"><svg width="18" height="18" viewBox="0 0 18 18" stroke="#333"><path d="M1 1h6M4 0v6" fill="none"/><rect x="4" y="5" width="9" height="9" fill="#ccc"/><rect x="7" y="8" width="9" height="9" fill="#74a85a"/></svg></div>
      <div class="w-[22px] h-full bg-[#b5b5b5] flex items-center justify-center"><svg width="18" height="18" viewBox="0 0 18 18" fill="#eee" stroke="#333"><path d="M6 1h6v5h5v6h-5v5H6v-5H1V6h5z"/></svg></div>
      <!-- under the watermark only the lower part of these shows -->
      <div class="w-[12px] h-full"></div>
      <div class="w-[30px] h-full bg-[#b5b5b5] text-[12px] text-[#111] text-center leading-[22px]">模型</div>
      <div class="w-[21px] h-full bg-[#b5b5b5] border-l border-[#555] flex items-end justify-center pb-[4px]"><div class="w-[14px] h-[3px] border-y border-[#222] bg-white"></div></div>
      <div class="w-[23px] h-full bg-[#b5b5b5] border-l border-[#555] flex items-end justify-center pb-[5px]"><div class="w-[15px] h-[3px] bg-[#666] rounded-[1px]"></div></div>
      <div class="w-[20px] h-full"></div>
      <div class="w-[48px] h-full bg-[#b5b5b5] flex items-end pb-[4px] pl-[8px] gap-[14px]"><svg width="14" height="8" viewBox="0 0 14 8"><path d="M0 0h14v8H0z" fill="#e9e21e"/><path d="M4 3l3 3 6-6" stroke="#3fa03a" stroke-width="2" fill="none"/></svg><div class="w-[5px] h-[8px] bg-[#eee] border-x border-[#777]"></div></div>
      <span class="w-[20px] text-[8px] text-[#111] text-center">▾</span>
      <div class="w-[16px] h-[17px] bg-white border border-[#222] border-t-[3px]"></div>
      <div class="ml-[3px] w-[15px] h-full bg-[#777] bg-[radial-gradient(#ddd_1px,transparent_1px)] bg-[length:4px_4px]"></div>
    </div>
    <div class="h-[3px] shrink-0 bg-gradient-to-r from-[#e8e8e8] from-40% to-[#666] to-50%"></div>

    <!-- watermark -->
    <div class="absolute left-[545px] top-[433px] w-[180px] h-[85px] bg-[#1f3059] flex items-center pl-[15px]">
      <svg width="36" height="36" viewBox="0 0 36 36" fill="none" stroke="#c4c9d4" stroke-width="3"><path d="M8 4C3 6 2 9 2 13v11c0 5 3 9 8 9 5 0 8-2 14-7 8-5 10-7 10-9 0-3-3-5-9-9C19 4 15 2 12 2"/><path d="M9 10v15" /><path d="M15 12l9 6-9 6z" fill="#c4c9d4" stroke="none"/></svg>
      <div class="ml-[14px] text-[#c6cad4]">
        <div class="text-[26px] leading-[28px] font-bold tracking-[1px] whitespace-nowrap">溜溜自学</div>
        <div class="text-[10px] leading-[13px] tracking-[1.500px] font-['DejaVu_Sans',sans-serif] whitespace-nowrap">ZIXUE.3D66.COM</div>
      </div>
    </div>
  </div>
</body>

</html>
